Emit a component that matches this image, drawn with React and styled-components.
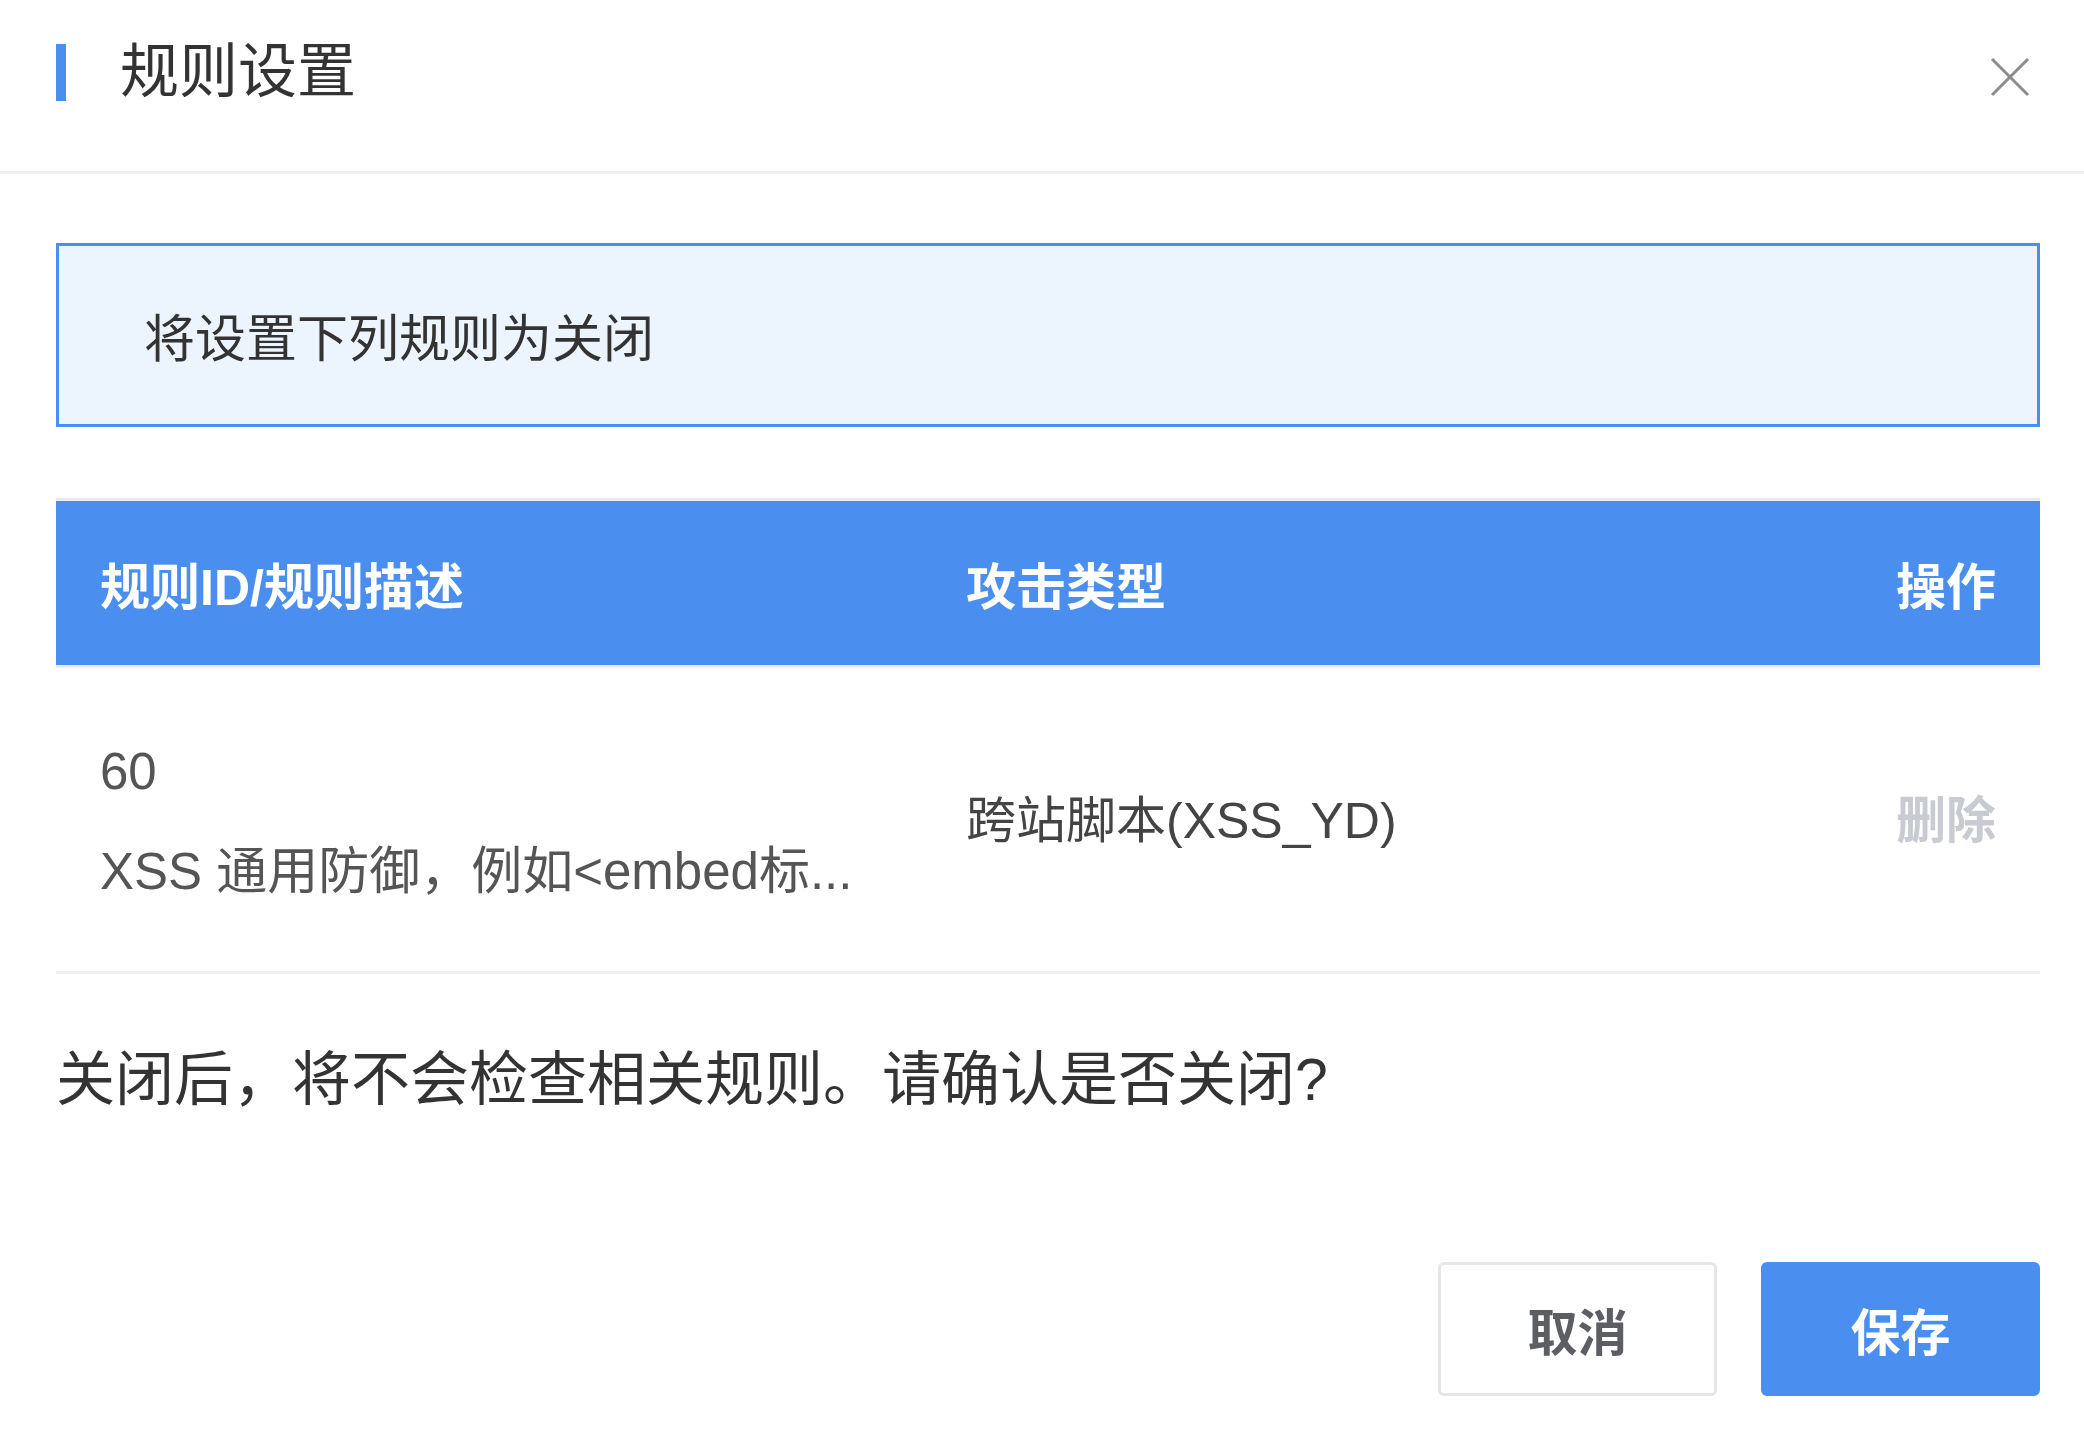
import React from 'react';
import styled, { createGlobalStyle } from 'styled-components';

const GlobalStyle = createGlobalStyle`
  body {
    margin: 0;
    background: #fff;
    font-family: "Liberation Sans", "Noto Sans CJK SC", sans-serif;
  }
`

const Dialog = styled.div`
  width: 2084px;
  height: 1440px;
  background: #fff;
  box-sizing: border-box;
`

const Header = styled.div`
  height: 174px;
  box-sizing: border-box;
  padding: 44px 56px 0 56px;
  border-bottom: 3px solid #f0f0f0;
  display: flex;
  align-items: flex-start;
`

const TitleBar = styled.span`
  width: 10px;
  height: 57px;
  background: #4a8ff0;
  flex-shrink: 0;
`

const Title = styled.h1`
  margin: 0 0 0 54px;
  font-size: 59px;
  line-height: 57px;
  font-weight: 400;
  color: #333;
`

const CloseButton = styled.button`
  margin-left: auto;
  margin-top: 12px;
  margin-right: -3px;
  width: 42px;
  height: 42px;
  padding: 0;
  border: none;
  background: transparent;
  cursor: pointer;
`

const Body = styled.div`
  padding: 0 44px 0 56px;
`

const Alert = styled.div`
  margin-top: 69px;
  height: 184px;
  box-sizing: border-box;
  border: 3px solid #4a8ff0;
  background: #ecf4fe;
  display: flex;
  align-items: center;
  padding-left: 85px;
  font-size: 51px;
  color: #333;
`

const Table = styled.div`
  margin-top: 74px;
  box-shadow: 0 -3px 0 #e6ecf5;
`

const HeadRow = styled.div`
  display: grid;
  grid-template-columns: 866px 1fr auto;
  align-items: center;
  height: 164px;
  padding: 0 44px;
  background: #4a8ff0;
  border-bottom: 3px solid #e9eef6;
`

const HeadCell = styled.div`
  color: #fff;
  font-size: 50px;
  font-weight: 700;
  text-align: ${props => (props.right ? 'right' : 'left')};
`

const Row = styled.div`
  display: grid;
  grid-template-columns: 866px 1fr auto;
  align-items: center;
  padding: 0 44px;
  border-bottom: 3px solid #eef0f4;
`

const RuleCell = styled.div`
  padding: 54px 0 49px;
  font-size: 51px;
  line-height: 100px;
  color: #555;
`

const TypeCell = styled.div`
  padding-bottom: 8px;
  font-size: 50px;
  color: #444;
`

const DeleteLink = styled.span`
  padding-bottom: 8px;
  font-size: 50px;
  font-weight: 700;
  color: #c8cbd1;
  cursor: pointer;
`

const Confirm = styled.p`
  margin: 66px 0 0;
  font-size: 59px;
  line-height: 80px;
  color: #333;
`

const Footer = styled.div`
  display: flex;
  justify-content: flex-end;
  gap: 44px;
  margin-top: 142px;
`

const FooterButton = styled.button`
  width: 279px;
  height: 134px;
  box-sizing: border-box;
  border-radius: 6px;
  font-family: inherit;
  font-size: 50px;
  font-weight: 700;
  cursor: pointer;
  border: 3px solid ${props => (props.primary ? '#4a8ff0' : '#e6e6e6')};
  background: ${props => (props.primary ? '#4a8ff0' : '#fff')};
  color: ${props => (props.primary ? '#fff' : '#5c5e63')};
`

const CloseIcon = () => (
  <svg width="42" height="42" viewBox="0 0 42 42">
    <path d="M3 3 L39 39 M39 3 L3 39" stroke="#8c8c8c" strokeWidth="3" fill="none" />
  </svg>
)

const rules = [
  { id: 60, desc: 'XSS 通用防御，例如<embed标...', type: '跨站脚本(XSS_YD)' },
]

const App = () => {
  return (
    <Dialog>
      <GlobalStyle />
      <Header>
        <TitleBar />
        <Title>规则设置</Title>
        <CloseButton aria-label="close">
          <CloseIcon />
        </CloseButton>
      </Header>
      <Body>
        <Alert>将设置下列规则为关闭</Alert>
        <Table>
          <HeadRow>
            <HeadCell>规则ID/规则描述</HeadCell>
            <HeadCell>攻击类型</HeadCell>
            <HeadCell right>操作</HeadCell>
          </HeadRow>
          {rules.map(rule => (
            <Row key={rule.id}>
              <RuleCell>
                <div>{rule.id}</div>
                <div>{rule.desc}</div>
              </RuleCell>
              <TypeCell>{rule.type}</TypeCell>
              <DeleteLink>删除</DeleteLink>
            </Row>
          ))}
        </Table>
        <Confirm>关闭后，将不会检查相关规则。请确认是否关闭?</Confirm>
        <Footer>
          <FooterButton>取消</FooterButton>
          <FooterButton primary>保存</FooterButton>
        </Footer>
      </Body>
    </Dialog>
  );
}

export default App;
